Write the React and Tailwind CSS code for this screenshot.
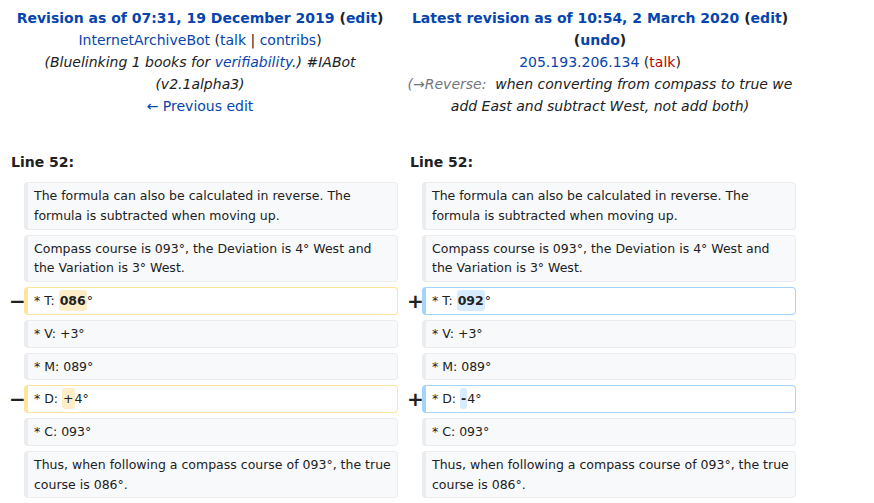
const link = "text-[#0645ad]";

function Cell({ kind, children }) {
  const styles = {
    ctx: "bg-[#f8f9fa] border-[#eaecf0]",
    del: "bg-white border-[#ffe49c]",
    add: "bg-white border-[#a3d3ff]",
  };
  return (
    <div
      className={`border border-l-4 rounded-[4px] pl-[6px] pr-[5px] py-[3px] leading-[19.75px] text-[12.5px] text-[#202122] ${styles[kind]}`}
    >
      {children}
    </div>
  );
}

function Marker({ sign }) {
  return (
    <div className="flex items-center justify-start pl-[9px] text-[20px] font-bold text-[#202122] leading-none">
      {sign}
    </div>
  );
}

function Del({ children, bold }) {
  return (
    <span className={`bg-[#feeec8] rounded-[3px] px-[1px] py-[3px] ${bold ? "font-bold" : ""}`}>{children}</span>
  );
}

function Ins({ children, bold }) {
  return (
    <span className={`bg-[#d8ecff] rounded-[3px] px-[1px] py-[3px] ${bold ? "font-bold" : ""}`}>{children}</span>
  );
}

const rows = [
  {
    left: { kind: "ctx", text: "The formula can also be calculated in reverse. The formula is subtracted when moving up." },
    right: { kind: "ctx", text: "The formula can also be calculated in reverse. The formula is subtracted when moving up." },
  },
  {
    left: { kind: "ctx", text: "Compass course is 093°, the Deviation is 4° West and the Variation is 3° West." },
    right: { kind: "ctx", text: "Compass course is 093°, the Deviation is 4° West and the Variation is 3° West." },
  },
  {
    left: { kind: "del", text: <>* T: <Del bold>086</Del>°</> },
    right: { kind: "add", text: <>* T: <Ins bold>092</Ins>°</> },
  },
  { left: { kind: "ctx", text: "* V: +3°" }, right: { kind: "ctx", text: "* V: +3°" } },
  { left: { kind: "ctx", text: "* M: 089°" }, right: { kind: "ctx", text: "* M: 089°" } },
  {
    left: { kind: "del", text: <>* D: <Del>+</Del>4°</> },
    right: { kind: "add", text: <>* D: <Ins bold>-</Ins>4°</> },
  },
  { left: { kind: "ctx", text: "* C: 093°" }, right: { kind: "ctx", text: "* C: 093°" } },
  {
    left: { kind: "ctx", text: "Thus, when following a compass course of 093°, the true course is 086°." },
    right: { kind: "ctx", text: "Thus, when following a compass course of 093°, the true course is 086°." },
  },
];

export default function App() {
  return (
    <div
      className="w-[874px] h-[503px] overflow-hidden bg-white text-[#202122]"
      style={{ fontFamily: '"DejaVu Sans", sans-serif' }}
    >
      {/* ── Revision headers ── */}
      <div className="grid grid-cols-[400px_400px] pt-[7px] text-[14px] leading-[22px] text-center">
        <div>
          <div className="font-bold">
            <span className={link}>Revision as of 07:31, 19 December 2019</span> (<span className={link}>edit</span>)
          </div>
          <div>
            <span className={link}>InternetArchiveBot</span> (<span className={link}>talk</span> |{" "}
            <span className={link}>contribs</span>)
          </div>
          <div className="italic text-[#202122]">
            (Bluelinking 1 books for <span className={link}>verifiability</span>.) #IABot
            <br />
            (v2.1alpha3)
          </div>
          <div>
            <span className={link}>← Previous edit</span>
          </div>
        </div>
        <div>
          <div className="font-bold">
            <span className={link}>Latest revision as of 10:54, 2 March 2020</span> (<span className={link}>edit</span>)
            <br />(<span className={link}>undo</span>)
          </div>
          <div>
            <span className={link}>205.193.206.134</span> (<span className="text-[#ba0000]">talk</span>)
          </div>
          <div className="italic">
            <span className="text-[#72777d]">(→Reverse:</span>
            <span className="whitespace-pre">  </span>when converting from compass to true we
            <br />
            add East and subtract West, not add both)
          </div>
        </div>
      </div>

      {/* ── Line numbers ── */}
      <div className="grid grid-cols-[398px_400px] mt-[34px] text-[14px] font-bold leading-[22px]">
        <div className="pl-[11px]">Line 52:</div>
        <div className="pl-[12px]">Line 52:</div>
      </div>

      {/* ── Diff rows ── */}
      <div className="mt-[9px] flex flex-col gap-[5px]">
        {rows.map((r, i) => (
          <div key={i} className="grid grid-cols-[24px_374px_24px_374px]">
            {r.left.kind === "del" ? <Marker sign="−" /> : <div />}
            <Cell kind={r.left.kind}>{r.left.text}</Cell>
            {r.right.kind === "add" ? <Marker sign="+" /> : <div />}
            <Cell kind={r.right.kind}>{r.right.text}</Cell>
          </div>
        ))}
      </div>
    </div>
  );
}
